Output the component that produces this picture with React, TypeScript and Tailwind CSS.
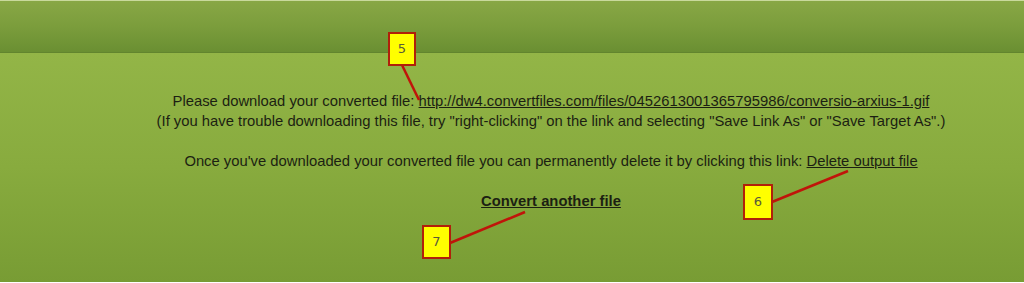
export default function App() {
  return (
    <div className="relative w-[1024px] h-[283px] overflow-hidden font-['Liberation_Sans',Arial,sans-serif] text-[#1c1f12]">
      <div className="h-px bg-[#c9d99c]" />
      <div className="h-[52px] bg-gradient-to-b from-[#88a745] via-[#7b9d3c] to-[#6a8f32] border-b border-[#62852e]" />
      <div className="h-[229px] bg-gradient-to-b from-[#93b547] via-[#88ab3e] to-[#789c34] pt-[38px] pl-[78px]">
        <div className="text-center text-[14.8px] leading-[20px]">
          <p>
            Please download your converted file:{" "}
            <a href="#" className="underline">
              http://dw4.convertfiles.com/files/0452613001365795986/conversio-arxius-1.gif
            </a>
          </p>
          <p>
            (If you have trouble downloading this file, try "right-clicking" on the link and selecting "Save Link As" or "Save Target As".)
          </p>
          <p className="mt-[20px]">
            Once you've downloaded your converted file you can permanently delete it by clicking this link:{" "}
            <a href="#" className="underline">
              Delete output file
            </a>
          </p>
          <p className="mt-[20px] font-bold">
            <a href="#" className="underline">
              Convert another file
            </a>
          </p>
        </div>
      </div>

      {/* callout lines */}
      <svg className="absolute left-0 top-0" width="1024" height="283">
        <line x1="402" y1="65" x2="419" y2="100" stroke="#c0140a" strokeWidth="2.5" />
        <line x1="772" y1="202" x2="848" y2="171" stroke="#c0140a" strokeWidth="2.5" />
        <line x1="450" y1="243" x2="525" y2="212" stroke="#c0140a" strokeWidth="2.5" />
      </svg>

      {/* callout boxes */}
      <div className="absolute left-[388px] top-[32px] w-[28px] h-[34px] bg-[#ffff00] border-2 border-[#b0200a] flex items-center justify-center text-[13px] text-[#5a5a3a] font-['DejaVu_Sans',sans-serif]">
        5
      </div>
      <div className="absolute left-[743px] top-[184px] w-[30px] h-[36px] bg-[#ffff00] border-2 border-[#b0200a] flex items-center justify-center text-[13px] text-[#5a5a3a] font-['DejaVu_Sans',sans-serif]">
        6
      </div>
      <div className="absolute left-[422px] top-[225px] w-[29px] h-[34px] bg-[#ffff00] border-2 border-[#b0200a] flex items-center justify-center text-[13px] text-[#5a5a3a] font-['DejaVu_Sans',sans-serif]">
        7
      </div>
    </div>
  );
}
